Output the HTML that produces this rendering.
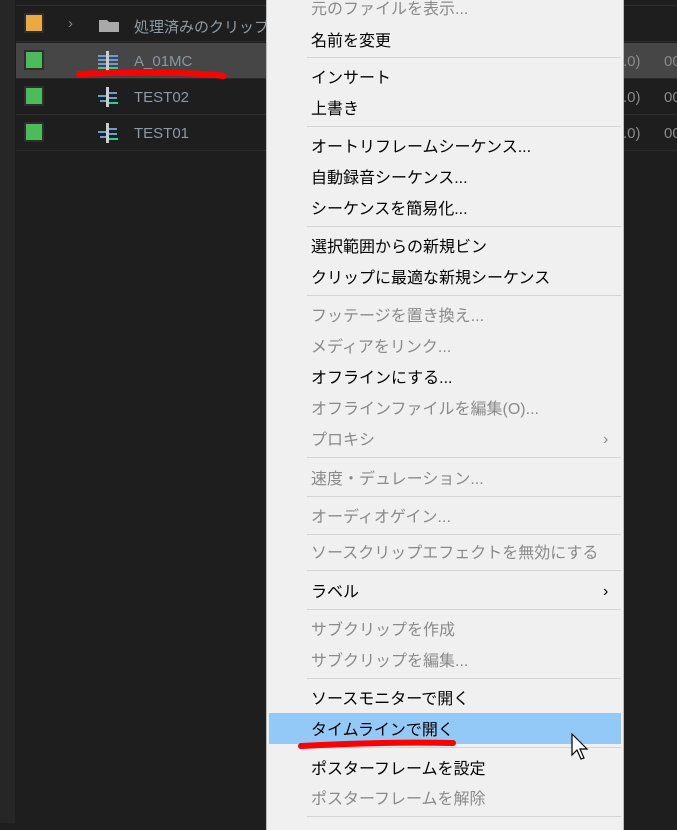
<!DOCTYPE html>
<html><head><meta charset="utf-8">
<style>
*{margin:0;padding:0;box-sizing:border-box}
body{width:677px;height:823px;overflow:hidden;background:#1e1e1e;position:relative;font-family:"Liberation Sans","Noto Sans CJK JP",sans-serif}
.strip{position:absolute;left:0;top:0;width:15px;height:823px;background:#262626}
.row{position:absolute;left:16px;width:661px;height:36px;border-bottom:1px solid #2c2c2c}
.sw{position:absolute;left:8px;width:20px;height:20px;border:2px solid #2e2e2e}
.nm{position:absolute;left:118px;font-size:15px;color:#8a9aa8}
.rt{position:absolute;font-size:15px;color:#8a8a8a}
.menu{position:absolute;left:266px;top:0px;width:358px;height:830px;background:#f0f0f0;border-left:1px solid #bcbcbc;border-right:1px solid #bcbcbc}
.it{position:absolute;left:44px;font-size:16px;color:#000;line-height:20px;white-space:nowrap}
.d{color:#8a8a8a}
.sep{position:absolute;left:40px;width:314px;height:1px;background:#d4d4d4}
</style></head><body>
<div class="strip"></div>
<div class="row" style="top:0;height:6px;border-bottom:1px solid #2c2c2c"></div>
<div class="row" style="top:6px">
 <div class="sw" style="top:7px;background:#eca93f"></div>
 <div style="position:absolute;left:52px;top:9px;color:#888;font-size:15px">›</div>
 <svg style="position:absolute;left:82px;top:11px" width="22" height="16"><path d="M1 3h8l2 2h10v10H1z" fill="#a9a9a9"/></svg>
 <div class="nm" style="top:10px;color:#8f9aa3">処理済みのクリップ</div>
</div>
<div class="row" style="top:43px;background:#464646">
 <div class="sw" style="top:7px;background:#4cbb5a"></div>
 <svg style="position:absolute;left:80px;top:7px" width="24" height="22"><rect x="2" y="5" width="20" height="2" fill="#6c9cd6"/><rect x="2" y="9" width="20" height="2" fill="#6c9cd6"/><rect x="2" y="13" width="20" height="2" fill="#6c9cd6"/><rect x="2" y="17" width="20" height="2" fill="#2fcf8d"/><rect x="10" y="1" width="3" height="20" fill="#ccc"/></svg>
 <div class="nm" style="top:10px;color:#8c959c">A_01MC</div>
 <div class="rt" style="left:607px;top:10px">.0)</div><div class="rt" style="left:648px;top:10px">00</div>
</div>
<div class="row" style="top:79px">
 <div class="sw" style="top:7px;background:#4cbb5a"></div>
 <svg style="position:absolute;left:80px;top:7px" width="24" height="22"><rect x="2" y="9" width="8" height="2" fill="#6c9cd6"/><rect x="13" y="6" width="8" height="2" fill="#6c9cd6"/><rect x="13" y="11" width="8" height="2" fill="#6c9cd6"/><rect x="4" y="14" width="6" height="2" fill="#6c9cd6"/><rect x="13" y="16" width="9" height="2" fill="#2fcf8d"/><rect x="10" y="1" width="3" height="20" fill="#ccc"/></svg>
 <div class="nm" style="top:10px">TEST02</div>
 <div class="rt" style="left:607px;top:10px">.0)</div><div class="rt" style="left:648px;top:10px">00</div>
</div>
<div class="row" style="top:115px">
 <div class="sw" style="top:7px;background:#4cbb5a"></div>
 <svg style="position:absolute;left:80px;top:7px" width="24" height="22"><rect x="2" y="9" width="8" height="2" fill="#6c9cd6"/><rect x="13" y="6" width="8" height="2" fill="#6c9cd6"/><rect x="13" y="11" width="8" height="2" fill="#6c9cd6"/><rect x="4" y="14" width="6" height="2" fill="#6c9cd6"/><rect x="13" y="16" width="9" height="2" fill="#2fcf8d"/><rect x="10" y="1" width="3" height="20" fill="#ccc"/></svg>
 <div class="nm" style="top:10px">TEST01</div>
 <div class="rt" style="left:607px;top:10px">.0)</div><div class="rt" style="left:648px;top:10px">00</div>
</div>
<svg style="position:absolute;left:74px;top:68px" width="160" height="16"><path d="M5 6 C60 4,120 4,150 8" stroke="#f00" stroke-width="6" fill="none" stroke-linecap="round"/></svg>

<div class="menu">
 <div class="it d" style="top:0px">元のファイルを表示...</div>
 <div class="it" style="top:32px">名前を変更</div>
 <div class="sep" style="top:57px"></div>
 <div class="it" style="top:69px">インサート</div>
 <div class="it" style="top:100px">上書き</div>
 <div class="sep" style="top:126px"></div>
 <div class="it" style="top:138px">オートリフレームシーケンス...</div>
 <div class="it" style="top:169px">自動録音シーケンス...</div>
 <div class="it" style="top:200px">シーケンスを簡易化...</div>
 <div class="sep" style="top:226px"></div>
 <div class="it" style="top:238px">選択範囲からの新規ビン</div>
 <div class="it" style="top:269px">クリップに最適な新規シーケンス</div>
 <div class="sep" style="top:295px"></div>
 <div class="it d" style="top:307px">フッテージを置き換え...</div>
 <div class="it d" style="top:338px">メディアをリンク...</div>
 <div class="it" style="top:369px">オフラインにする...</div>
 <div class="it d" style="top:400px">オフラインファイルを編集(O)...</div>
 <div class="it d" style="top:431px">プロキシ</div>
 <div class="it d" style="top:430px;left:336px">›</div>
 <div class="sep" style="top:457px"></div>
 <div class="it d" style="top:470px">速度・デュレーション...</div>
 <div class="sep" style="top:496px"></div>
 <div class="it d" style="top:508px">オーディオゲイン...</div>
 <div class="sep" style="top:534px"></div>
 <div class="it d" style="top:544px">ソースクリップエフェクトを無効にする</div>
 <div class="sep" style="top:570px"></div>
 <div class="it" style="top:583px">ラベル</div>
 <div class="it" style="top:582px;left:336px">›</div>
 <div class="sep" style="top:609px"></div>
 <div class="it d" style="top:621px">サブクリップを作成</div>
 <div class="it d" style="top:652px">サブクリップを編集...</div>
 <div class="sep" style="top:678px"></div>
 <div class="it" style="top:690px">ソースモニターで開く</div>
 <div style="position:absolute;left:2px;top:713px;width:352px;height:31px;background:#93c9f7"></div>
 <div class="it" style="top:721px">タイムラインで開く</div>
 <div class="sep" style="top:747px"></div>
 <div class="it" style="top:760px">ポスターフレームを設定</div>
 <div class="it d" style="top:790px">ポスターフレームを解除</div>
 <div class="sep" style="top:816px"></div>
</div>
<svg style="position:absolute;left:296px;top:738px" width="164" height="14"><path d="M5 8 C60 5,110 4,157 5" stroke="#f00" stroke-width="6" fill="none" stroke-linecap="round"/></svg>
<svg style="position:absolute;left:571px;top:733px" width="22" height="30"><path d="M1 1 L1 22 L6 17 L10 26 L13 25 L9 16 L16 16 Z" fill="#fff" stroke="#000" stroke-width="1.2"/></svg>
</body></html>
